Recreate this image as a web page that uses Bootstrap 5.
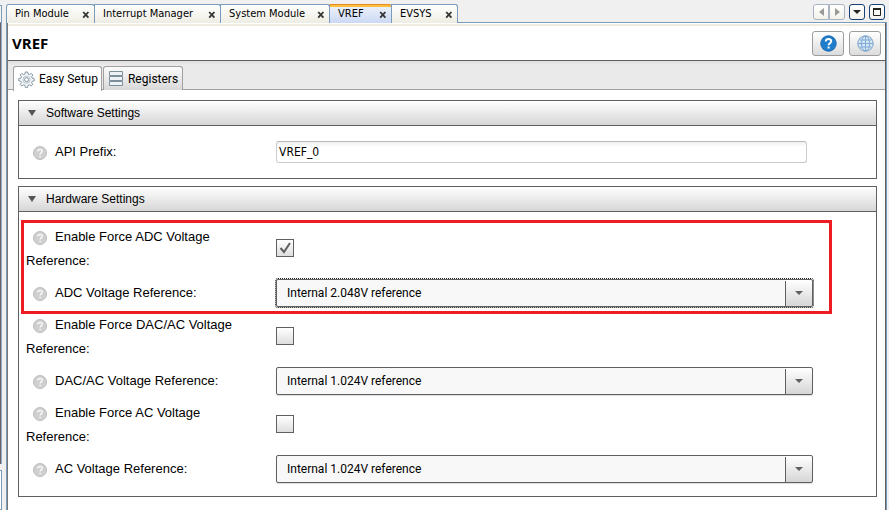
<!DOCTYPE html>
<html lang="en">
<head>
<meta charset="utf-8">
<meta name="viewport" content="width=device-width, initial-scale=1">
<title>VREF</title>
<link href="https://cdn.jsdelivr.net/npm/bootstrap@5.3.0/dist/css/bootstrap.min.css" rel="stylesheet">
<style>
:root { --ink: #606060; --frame: #7a9cbc; --metal: linear-gradient(#fff, #d6d6d6); --ui: Roboto, sans-serif; }
body { background: #f0f0f0; color: #000; font: 13px/24px "Liberation Sans", Arial, sans-serif; overflow-x: hidden; }
button { color: #000; padding: 0; }

/* edge of the neighbouring window */
.edge-strip { width: 6px; padding-top: 5px; }
.edge-top { height: 18px; width: 2px; border: 1px solid var(--frame); border-left: 0; background: #f5f5f0; }
.edge-body { width: 2px; background: #69676b; border-right: 1px solid #8fa9c4; flex: 1 1 0; }
.edge-foot { height: 40px; width: 2px; margin-top: 6px; border: 1px solid var(--frame); border-left: 0; background: #fff; }
.edge-right { width: 2px; }

/* document tabs */
.doc-bar { height: 23px; padding: 4px 2px 0 0; border-bottom: 1px solid var(--frame); }
.doc-tab { height: 19px; padding: 0 4px 0 8px; border: 1px solid var(--frame); border-bottom: 0; border-top-right-radius: 3px; margin-right: -1px; background: linear-gradient(#fff, #eeede3); font: 11px/18px "DejaVu Sans Condensed", "DejaVu Sans", sans-serif; }
.doc-tab:first-child { border-top-left-radius: 3px; }
.doc-tab button { border: 0; background: none; line-height: 18px; white-space: nowrap; }
.doc-tab.current { background: linear-gradient(#ffc03c 0 2px, #ebf0fb 2px, #ccd9f4); border-top-color: #e8892b; }
.w-pin { width: 89px; } .w-int { width: 127px; } .w-sys { width: 110px; } .w-vref { width: 63px; } .w-ev { width: 67px; }
.close-x svg { display: block; margin-top: 2px; }
.win-btn { height: 16px; width: 16px; border: 1px solid #173f78; border-radius: 3px; background: linear-gradient(#fff, #f3f2ea); }
.win-btn.pale { border-color: #a9b4c2; }
.win-btn svg, .tool-btn svg { display: block; margin: auto; }

/* window body */
.pane { border-left: 1px solid var(--frame); border-right: 1px solid var(--frame); background: #fff; }
.pane-inner { border-left: 1px solid #777; border-right: 1px solid var(--ink); }
.title-bar { height: 37px; padding: 2px 4px 0; border-top: 1px solid #fff; box-shadow: inset 0 2px #f0ecdf; }
.title-bar h1 { font: bold 15px/34px "Open Sans", sans-serif; margin: 0; }
.tool-set { gap: 5px; }
.tool-btn { width: 32px; height: 25px; border: 1px solid #9d9d9d; border-radius: 3px; background: linear-gradient(#fff, #dcdcdc); }
.mode-bar { height: 30px; padding: 5px 5px 0; gap: 1px; border-top: 1px solid var(--ink); background: linear-gradient(#dfdfdf, #eaeaea 4px); border-bottom: 1px solid #a0a0a0; }
.mode-tab { height: 24px; border: 1px solid #a0a0a0; border-bottom: 0; border-radius: 3px 3px 0 0; background: linear-gradient(#fbfbfb, #d9d9d9); font: 12px/22px var(--ui); padding: 0 4px; gap: 4px; white-space: nowrap; }
.mode-tab.current { background: #fff; height: 25px; padding: 0 3px 0 4px; margin-bottom: -1px; }

/* settings sections */
.settings { padding: 10px 8px 13px 10px; gap: 7px; }
.group { border: 1px solid var(--ink); }
.group-head { height: 25px; border: 0; border-bottom: 1px solid var(--ink); background: var(--metal); font-size: 12px; line-height: 24px; padding-left: 9px; gap: 10px; }
.group-body { padding: 13px 63px 13px 7px; gap: 6px; }
.group-body.roomy { padding-top: 15px; padding-bottom: 15px; }
.stack { gap: 6px; }
.caption { flex: 0 0 250px; padding-right: 30px; }
.caption svg { margin: 0 8px 0 7px; vertical-align: -4px; }
.picker { height: 28px; padding: 0 32px 0 10px; border: 1px solid var(--ink); border-radius: 2px; appearance: none; font: 12px/26px var(--ui); color: #000; box-shadow: 0 1px 1px #ddd;
  background: url("data:image/svg+xml,%3Csvg xmlns='http://www.w3.org/2000/svg' width='8' height='4'%3E%3Cpath d='M0 0h8L4 4z' fill='%23606060'/%3E%3C/svg%3E") right 9px center no-repeat, linear-gradient(var(--ink), var(--ink)) right 26px bottom / 1px 25px no-repeat, linear-gradient(#fff, #d6d6d6) right / 26px 100% no-repeat, #f8f8f8; }
.picker.focused { outline: 1px dotted #222; outline-offset: 0; }
.prefix { height: 22px; margin-right: 6px; padding: 0 2px; border: 1px solid #ccc; border-top-color: #b8b8b8; border-radius: 3px; background: linear-gradient(#f0f0f0, #fff 5px); font: 12px/20px "DejaVu Sans Condensed", "DejaVu Sans", sans-serif; color: #000; }
.tick { appearance: none; width: 18px; height: 18px; margin: 0 0 2px; border: 1px solid var(--ink); background: linear-gradient(#fff, #dedede); }
.tick:checked { background: url("data:image/svg+xml,%3Csvg xmlns='http://www.w3.org/2000/svg' width='16' height='16'%3E%3Cpath d='M3.500 8l3.500 4 6-9' fill='none' stroke='%23606060' stroke-width='2'/%3E%3C/svg%3E") center no-repeat, linear-gradient(#fff, #dedede); }
.callout-box::after { content: ""; position: absolute; inset: -5px -19px -7px -5px; border: 3px solid #ed1c24; pointer-events: none; }
</style>
</head>
<body>
<svg class="d-none" xmlns="http://www.w3.org/2000/svg">
  <symbol id="x" viewBox="0 0 8 8"><path d="M1.2 1l5.2 5.6M6.4 1L1.2 6.6" stroke="#333" stroke-width="1.8"/></symbol>
  <symbol id="help" viewBox="0 0 14 14"><circle cx="7" cy="7" r="6.5" fill="#cfcfcf" stroke="#bdbdbd"/><path d="M4.8 5.4C4.9 2.9 9.3 2.9 9.2 5.3 9.1 6.8 7.1 6.7 7.1 8.6M7.1 9.7v1.6" fill="none" stroke="#f8f8f8" stroke-width="1.6"/></symbol>
  <symbol id="fold" viewBox="0 0 8 6"><path d="M0 0h8L4 6z" fill="#555"/></symbol>
</svg>
<div class="d-flex min-vh-100">
  <div class="edge-strip d-flex flex-column flex-shrink-0"><div class="edge-top"></div><div class="edge-body"></div><div class="edge-foot"></div></div>
  <div class="d-flex flex-column flex-grow-1">
    <div class="doc-bar d-flex align-items-start">
      <div class="doc-tab w-pin d-flex justify-content-between"><button type="button">Pin Module</button><button class="close-x" type="button" aria-label="Close Pin Module"><svg width="8" height="8"><use href="#x"/></svg></button></div>
      <div class="doc-tab w-int d-flex justify-content-between"><button type="button">Interrupt Manager</button><button class="close-x" type="button" aria-label="Close Interrupt Manager"><svg width="8" height="8"><use href="#x"/></svg></button></div>
      <div class="doc-tab w-sys d-flex justify-content-between"><button type="button">System Module</button><button class="close-x" type="button" aria-label="Close System Module"><svg width="8" height="8"><use href="#x"/></svg></button></div>
      <div class="doc-tab w-vref current d-flex justify-content-between"><button type="button">VREF</button><button class="close-x" type="button" aria-label="Close VREF"><svg width="8" height="8"><use href="#x"/></svg></button></div>
      <div class="doc-tab w-ev d-flex justify-content-between"><button type="button">EVSYS</button><button class="close-x" type="button" aria-label="Close EVSYS"><svg width="8" height="8"><use href="#x"/></svg></button></div>
      <div class="d-flex ms-auto gap-1">
        <div class="d-flex"><button class="win-btn pale rounded-end-0" type="button" aria-label="Previous"><svg width="5" height="8"><path d="M5 0v8L0 4z" fill="#999"/></svg></button><button class="win-btn pale rounded-start-0" type="button" aria-label="Next"><svg width="5" height="8"><path d="M0 0v8l5-4z" fill="#999"/></svg></button></div>
        <button class="win-btn" type="button" aria-label="List documents"><svg width="8" height="4"><path d="M0 0h8L4 4z" fill="#222"/></svg></button>
        <button class="win-btn" type="button" aria-label="Maximize"><svg width="8" height="8"><path d="M.5 .5h7v7h-7z" fill="none" stroke="#222"/><path d="M0 1h8" stroke="#222" stroke-width="2"/></svg></button>
      </div>
    </div>
    <div class="pane d-flex flex-grow-1"><div class="pane-inner flex-grow-1">
      <header class="title-bar d-flex align-items-center justify-content-between">
        <h1>VREF</h1>
        <div class="tool-set d-flex">
          <button class="tool-btn" type="button" aria-label="Help"><svg width="17" height="17" viewBox="0 0 17 17"><circle cx="8.500" cy="8.500" r="7.700" fill="#1f7dcc" stroke="#1766ac"/><path d="M5.800 6.500C5.900 3.300 11.300 3.300 11.200 6.400 11.100 8.300 8.600 8.200 8.600 10.300M8.600 11.500v2" fill="none" stroke="#fff" stroke-width="2"/></svg></button>
          <button class="tool-btn" type="button" aria-label="Online"><svg width="17" height="17" viewBox="0 0 17 17"><circle cx="8.500" cy="8.500" r="7.700" fill="#d5e6f5" stroke="#7d9fc4"/><g fill="none" stroke="#7fa9d6"><ellipse cx="8.500" cy="8.500" rx="4" ry="7.500"/><path d="M1 8.500h15M2.500 5h12M2.500 12h12M8.500 1v15"/></g></svg></button>
        </div>
      </header>
      <nav class="mode-bar d-flex">
        <button class="mode-tab current d-flex align-items-center" type="button"><svg width="17" height="17" viewBox="0 0 17 17" fill="none" stroke="#8697a3"><path d="M7.300 1h2.400l.4 2.100 1.300.5 1.800-1.200 1.600 1.600-1.200 1.800.5 1.300 2.100.4v2.400l-2.100.4-.5 1.300 1.200 1.800-1.600 1.600-1.800-1.200-1.300.5-.4 2.100H7.300l-.4-2.100-1.300-.5-1.800 1.200-1.600-1.600 1.200-1.800-.5-1.300L.8 9.900V7.500l2.100-.4.5-1.300L2.200 4l1.600-1.600 1.800 1.200 1.300-.5z" fill="#f3f7f9"/><circle cx="8.500" cy="8.700" r="3.600" stroke="#b9c5cc"/><circle cx="8.500" cy="8.700" r="2" fill="#fff"/></svg>Easy Setup</button>
        <button class="mode-tab d-flex align-items-center" type="button"><svg width="16" height="16" viewBox="0 0 16 16" fill="#eef4f5" stroke="#7d8f98"><path d="M1.500.5h13v4h-13zM1.500 5.500h13v4h-13zM1.500 10.500h13v4h-13z"/></svg>Registers</button>
      </nav>
      <main class="settings d-flex flex-column">
        <section class="group">
          <button class="group-head d-flex align-items-center w-100" type="button" aria-expanded="true"><svg width="8" height="6"><use href="#fold"/></svg>Software Settings</button>
          <div class="group-body roomy d-flex flex-column">
            <div class="d-flex align-items-center"><label class="caption lh-1" for="api"><svg width="14" height="14"><use href="#help"/></svg>API Prefix:</label><input class="prefix flex-grow-1" id="api" type="text" value="VREF_0"></div>
          </div>
        </section>
        <section class="group">
          <button class="group-head d-flex align-items-center w-100" type="button" aria-expanded="true"><svg width="8" height="6"><use href="#fold"/></svg>Hardware Settings</button>
          <div class="group-body d-flex flex-column">
            <div class="callout-box stack position-relative d-flex flex-column">
              <div class="d-flex align-items-center"><label class="caption" for="fadc"><svg width="14" height="14"><use href="#help"/></svg>Enable Force ADC Voltage Reference:</label><input class="tick" id="fadc" type="checkbox" checked></div>
              <div class="d-flex align-items-center"><label class="caption" for="adc"><svg width="14" height="14"><use href="#help"/></svg>ADC Voltage Reference:</label><select class="picker focused flex-grow-1" id="adc"><option>Internal 2.048V reference</option></select></div>
            </div>
            <div class="d-flex align-items-center"><label class="caption" for="fdac"><svg width="14" height="14"><use href="#help"/></svg>Enable Force DAC/AC Voltage Reference:</label><input class="tick" id="fdac" type="checkbox"></div>
            <div class="d-flex align-items-center"><label class="caption" for="dac"><svg width="14" height="14"><use href="#help"/></svg>DAC/AC Voltage Reference:</label><select class="picker flex-grow-1" id="dac"><option>Internal 1.024V reference</option></select></div>
            <div class="d-flex align-items-center"><label class="caption" for="fac"><svg width="14" height="14"><use href="#help"/></svg>Enable Force AC Voltage Reference:</label><input class="tick" id="fac" type="checkbox"></div>
            <div class="d-flex align-items-center"><label class="caption" for="ac"><svg width="14" height="14"><use href="#help"/></svg>AC Voltage Reference:</label><select class="picker flex-grow-1" id="ac"><option>Internal 1.024V reference</option></select></div>
          </div>
        </section>
      </main>
    </div></div>
  </div>
  <div class="edge-right flex-shrink-0"></div>
</div>
<script src="https://cdn.jsdelivr.net/npm/bootstrap@5.3.0/dist/js/bootstrap.bundle.min.js"></script>
</body>
</html>
